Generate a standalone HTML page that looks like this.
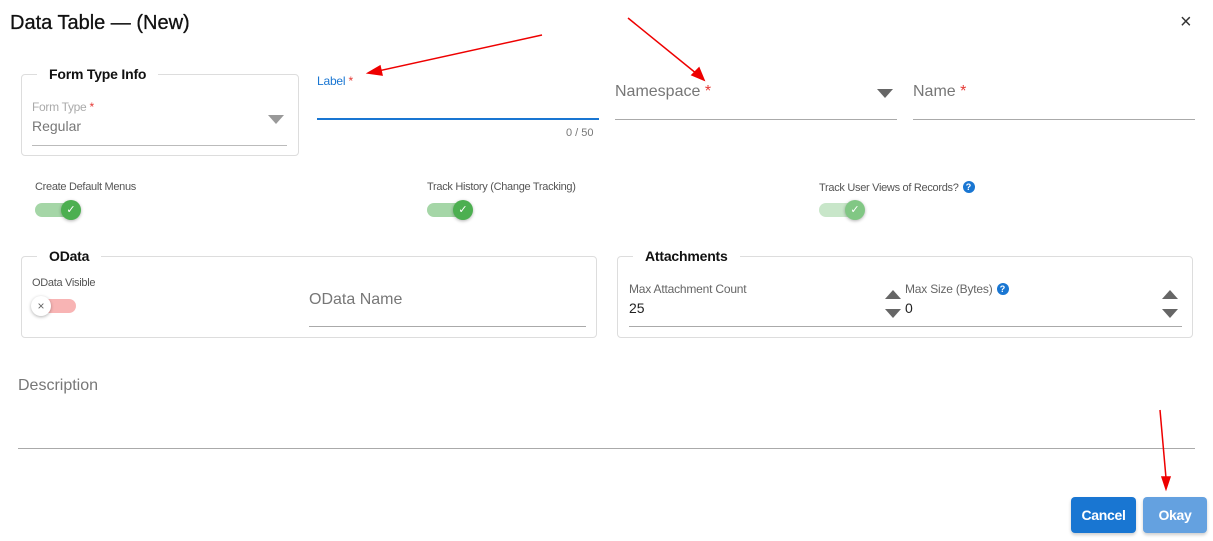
<!DOCTYPE html>
<html><head><meta charset="utf-8"><style>
*{box-sizing:border-box;margin:0;padding:0}
body{width:1213px;height:541px;background:#fff;font-family:"Liberation Sans",sans-serif;position:relative;overflow:hidden;color:#222}
.a{position:absolute;white-space:nowrap}
.box{position:absolute;border:1px solid #ddd;border-radius:4px}
.leg{position:absolute;background:#fff;padding:0 12px;font-weight:bold;font-size:14px;color:#111;letter-spacing:-0.2px}
.line{position:absolute;height:1px;background:#aaa}
.sm{font-size:11px;color:#555;letter-spacing:-0.3px}
.star{color:#e53935}
.tr{position:absolute;width:36px;height:14px;border-radius:7px;background:#a5d6a7}
.kn{position:absolute;width:20px;height:20px;border-radius:50%;background:#4caf50;box-shadow:0 1px 3px rgba(0,0,0,.3);color:#fff;font-size:11px;text-align:center;line-height:20px}
.tri-d{position:absolute;width:0;height:0;border-left:8px solid transparent;border-right:8px solid transparent;border-top:9px solid #666}
.tri-u{position:absolute;width:0;height:0;border-left:8px solid transparent;border-right:8px solid transparent;border-bottom:9px solid #666}
.q{display:inline-block;width:12px;height:12px;border-radius:50%;background:#1976d2;color:#fff;font-size:9px;font-weight:bold;text-align:center;line-height:12px;vertical-align:1px;margin-left:4px;letter-spacing:0}
.btn{position:absolute;border-radius:4px;color:#fff;font-weight:bold;font-size:14px;text-align:center;line-height:36px;box-shadow:0 2px 3px rgba(0,0,0,.2);letter-spacing:-0.3px}
</style></head><body>
<div class="a" style="left:10px;top:12px;font-size:20px;color:#111;-webkit-text-stroke:0.3px #111">Data Table — (New)</div>
<div class="a" style="left:1180px;top:11px;font-size:20px;color:#333">×</div>

<div class="box" style="left:21px;top:74px;width:278px;height:82px"></div>
<div class="leg" style="left:37px;top:66px">Form Type Info</div>
<div class="a" style="left:32px;top:100px;font-size:12px;color:#aaa;letter-spacing:-0.3px">Form Type <span class="star">*</span></div>
<div class="a" style="left:32px;top:118px;font-size:14px;color:#777">Regular</div>
<div class="tri-d" style="left:268px;top:115px;border-top-color:#999"></div>
<div class="line" style="left:32px;top:145px;width:255px;background:#bbb"></div>

<div class="a" style="left:317px;top:74px;font-size:12px;color:#1976d2;letter-spacing:-0.2px">Label <span class="star">*</span></div>
<div class="a" style="left:317px;top:118px;width:282px;height:2px;background:#1976d2"></div>
<div class="a" style="left:566px;top:127px;font-size:11px;color:#777">0 / 50</div>

<div class="a" style="left:615px;top:83px;font-size:16px;color:#777">Namespace <span class="star">*</span></div>
<div class="tri-d" style="left:877px;top:89px"></div>
<div class="line" style="left:615px;top:119px;width:282px"></div>
<div class="a" style="left:913px;top:83px;font-size:16px;color:#777">Name <span class="star">*</span></div>
<div class="line" style="left:913px;top:119px;width:282px"></div>

<div class="a sm" style="left:35px;top:181px">Create Default Menus</div>
<div class="tr" style="left:35px;top:203px"></div><div class="kn" style="left:61px;top:200px">✓</div>
<div class="a sm" style="left:427px;top:181px">Track History (Change Tracking)</div>
<div class="tr" style="left:427px;top:203px"></div><div class="kn" style="left:453px;top:200px">✓</div>
<div class="a sm" style="left:819px;top:181px">Track User Views of Records?<span class="q">?</span></div>
<div class="tr" style="left:819px;top:203px;background:#c8e6c9"></div><div class="kn" style="left:845px;top:200px;background:#81c784">✓</div>

<div class="box" style="left:21px;top:256px;width:576px;height:82px"></div>
<div class="leg" style="left:37px;top:248px">OData</div>
<div class="a sm" style="left:32px;top:277px">OData Visible</div>
<div class="tr" style="left:40px;top:299px;background:#f8b4b4"></div>
<div class="kn" style="left:31px;top:296px;background:#fff;color:#666;font-size:12px">×</div>
<div class="a" style="left:309px;top:291px;font-size:16px;color:#777">OData Name</div>
<div class="line" style="left:309px;top:326px;width:277px"></div>

<div class="box" style="left:617px;top:256px;width:576px;height:82px"></div>
<div class="leg" style="left:633px;top:248px">Attachments</div>
<div class="a" style="left:629px;top:282px;font-size:12px;color:#666;letter-spacing:-0.2px">Max Attachment Count</div>
<div class="a" style="left:629px;top:300px;font-size:14px;color:#222">25</div>
<div class="tri-u" style="left:885px;top:290px"></div><div class="tri-d" style="left:885px;top:309px"></div>
<div class="a" style="left:905px;top:282px;font-size:12px;color:#666;letter-spacing:-0.2px">Max Size (Bytes)<span class="q">?</span></div>
<div class="a" style="left:905px;top:300px;font-size:14px;color:#222">0</div>
<div class="tri-u" style="left:1162px;top:290px"></div><div class="tri-d" style="left:1162px;top:309px"></div>
<div class="line" style="left:629px;top:326px;width:553px"></div>

<div class="a" style="left:18px;top:377px;font-size:16px;color:#777">Description</div>
<div class="line" style="left:18px;top:448px;width:1177px"></div>

<div class="btn" style="left:1071px;top:497px;width:65px;background:#1976d2">Cancel</div>
<div class="btn" style="left:1143px;top:497px;width:64px;background:#64a1e0">Okay</div>

<svg class="a" style="left:0;top:0" width="1213" height="541">
<g stroke="#e00" stroke-width="1.5" fill="#e00">
<line x1="542" y1="35" x2="378" y2="71"/><polygon points="368,73 380,66 382,75"/>
<line x1="628" y1="18" x2="697" y2="74"/><polygon points="704,80 692,75 699,68"/>
<line x1="1160" y1="410" x2="1166" y2="478"/><polygon points="1166,489 1162,477 1170,477"/>
</g></svg>
</body></html>
